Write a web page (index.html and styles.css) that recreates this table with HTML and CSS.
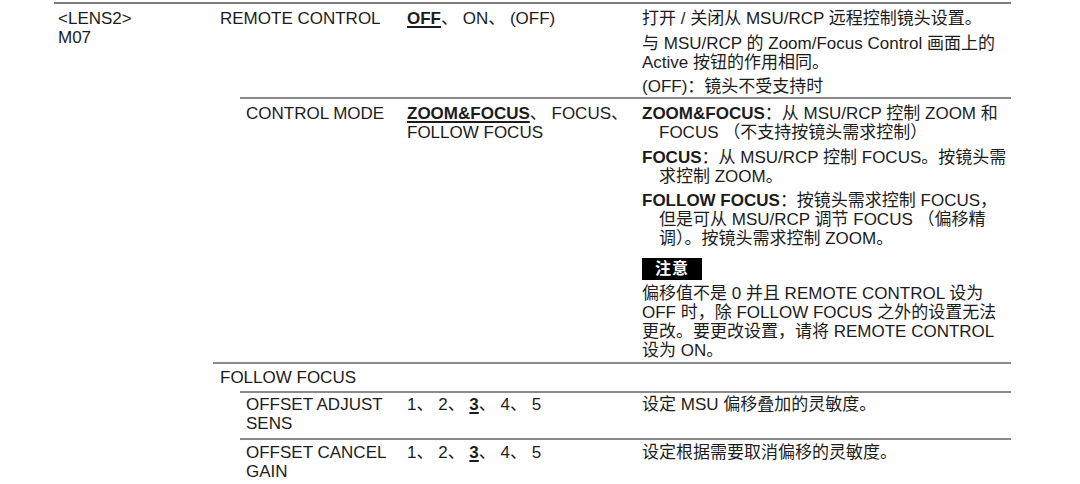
FILE: index.html
```html
<!DOCTYPE html>
<html lang="zh-CN">
<head>
<meta charset="utf-8">
<title>LENS2 M07</title>
<link rel="stylesheet" href="styles.css">
</head>
<body>
<div class="table">
  <div class="group">
    <div class="menu">&lt;LENS2&gt;<br>M07</div>
    <div class="items">
      <div class="row lvl1 first">
        <div class="name">REMOTE CONTROL</div>
        <div class="val"><b class="def">OFF</b>、 ON、 (OFF)</div>
        <div class="desc">
          <p>打开 / 关闭从 MSU/RCP 远程控制镜头设置。</p>
          <p class="g6">与 MSU/RCP 的 Zoom/Focus Control 画面上的<br>Active 按钮的作用相同。</p>
          <p>(OFF)：镜头不受支持时</p>
        </div>
      </div>
      <div class="row lvl2 mid">
        <div class="name">CONTROL MODE</div>
        <div class="val"><b class="def">ZOOM&amp;FOCUS</b>、 FOCUS、<br>FOLLOW FOCUS</div>
        <div class="desc">
          <p class="hang"><b>ZOOM&amp;FOCUS</b>：从 MSU/RCP 控制 ZOOM 和<br>FOCUS （不支持按镜头需求控制）</p>
          <p class="hang g6"><b>FOCUS</b>：从 MSU/RCP 控制 FOCUS。按镜头需<br>求控制 ZOOM。</p>
          <p class="hang"><b>FOLLOW FOCUS</b>：按镜头需求控制 FOCUS，<br>但是可从 MSU/RCP 调节 FOCUS （偏移精<br>调）。按镜头需求控制 ZOOM。</p>
          <div class="note"><span class="badge">注意</span></div>
          <p class="notetext">偏移值不是 0 并且 REMOTE CONTROL 设为<br>OFF 时，除 FOLLOW FOCUS 之外的设置无法<br>更改。要更改设置，请将 REMOTE CONTROL<br>设为 ON。</p>
        </div>
      </div>
      <div class="row lvl1 r3">
        <div class="name">FOLLOW FOCUS</div>
        <div class="val"></div>
        <div class="desc"></div>
      </div>
      <div class="row lvl2 r4">
        <div class="name">OFFSET ADJUST SENS</div>
        <div class="val">1、 2、 <b class="def">3</b>、 4、 5</div>
        <div class="desc"><p>设定 MSU 偏移叠加的灵敏度。</p></div>
      </div>
      <div class="row lvl2 r5">
        <div class="name">OFFSET CANCEL GAIN</div>
        <div class="val">1、 2、 <b class="def">3</b>、 4、 5</div>
        <div class="desc"><p>设定根据需要取消偏移的灵敏度。</p></div>
      </div>
    </div>
  </div>
</div>
</body>
</html>
```

FILE: styles.css
```css
html, body {
  margin: 0;
  padding: 0;
  background: #ffffff;
}
body {
  font-family: "Liberation Sans", "Noto Sans CJK SC", sans-serif;
  font-size: 17px;
  line-height: 19px;
  color: #1c1c1c;
}
p {
  margin: 0;
}
.table {
  margin: 2px 0 0 54px;
  width: 957px;
  border-top: 2px solid #7c7c7c;
}
.group {
  display: grid;
  grid-template-columns: 159px 1fr;
}
.menu {
  padding: 5px 0 0 4px;
}
.items {
  display: flex;
  flex-direction: column;
}
.row {
  display: grid;
  border-top: 2px solid #8a8a8a;
  padding: 5px 0 2px;
}
.row.first {
  border-top: none;
  padding-bottom: 1px;
}
.row.mid {
  padding-bottom: 2px;
}
.row.lvl1 {
  padding-left: 7px;
  grid-template-columns: 187px 235px 1fr;
}
.row.lvl2 {
  margin-left: 27px;
  padding-left: 6px;
  grid-template-columns: 161px 235px 1fr;
}
.row.r3 {
  padding-top: 3.5px;
  padding-bottom: 4.5px;
}
.row.r4 {
  padding-top: 2px;
  padding-bottom: 5px;
}
.row.r5 {
  padding-top: 3px;
  padding-bottom: 2px;
}
.name {
  padding-right: 10px;
}
.val {
  padding-right: 6px;
}
.def {
  font-weight: bold;
  text-decoration: underline;
  text-decoration-thickness: 1.5px;
  text-underline-offset: 2px;
}
.desc p + p {
  margin-top: 5px;
}
.desc p.g6 {
  margin-top: 6px;
}
.desc b {
  font-weight: bold;
}
.hang {
  padding-left: 17px;
  text-indent: -17px;
}
.note {
  margin-top: 10px;
  display: flex;
}
.badge {
  display: inline-block;
  width: 60px;
  height: 22px;
  line-height: 22px;
  background: #000000;
  color: #ffffff;
  font-weight: bold;
  font-size: 16px;
  text-align: center;
  letter-spacing: 1px;
}
.desc .notetext {
  margin-top: 4px;
}
```
